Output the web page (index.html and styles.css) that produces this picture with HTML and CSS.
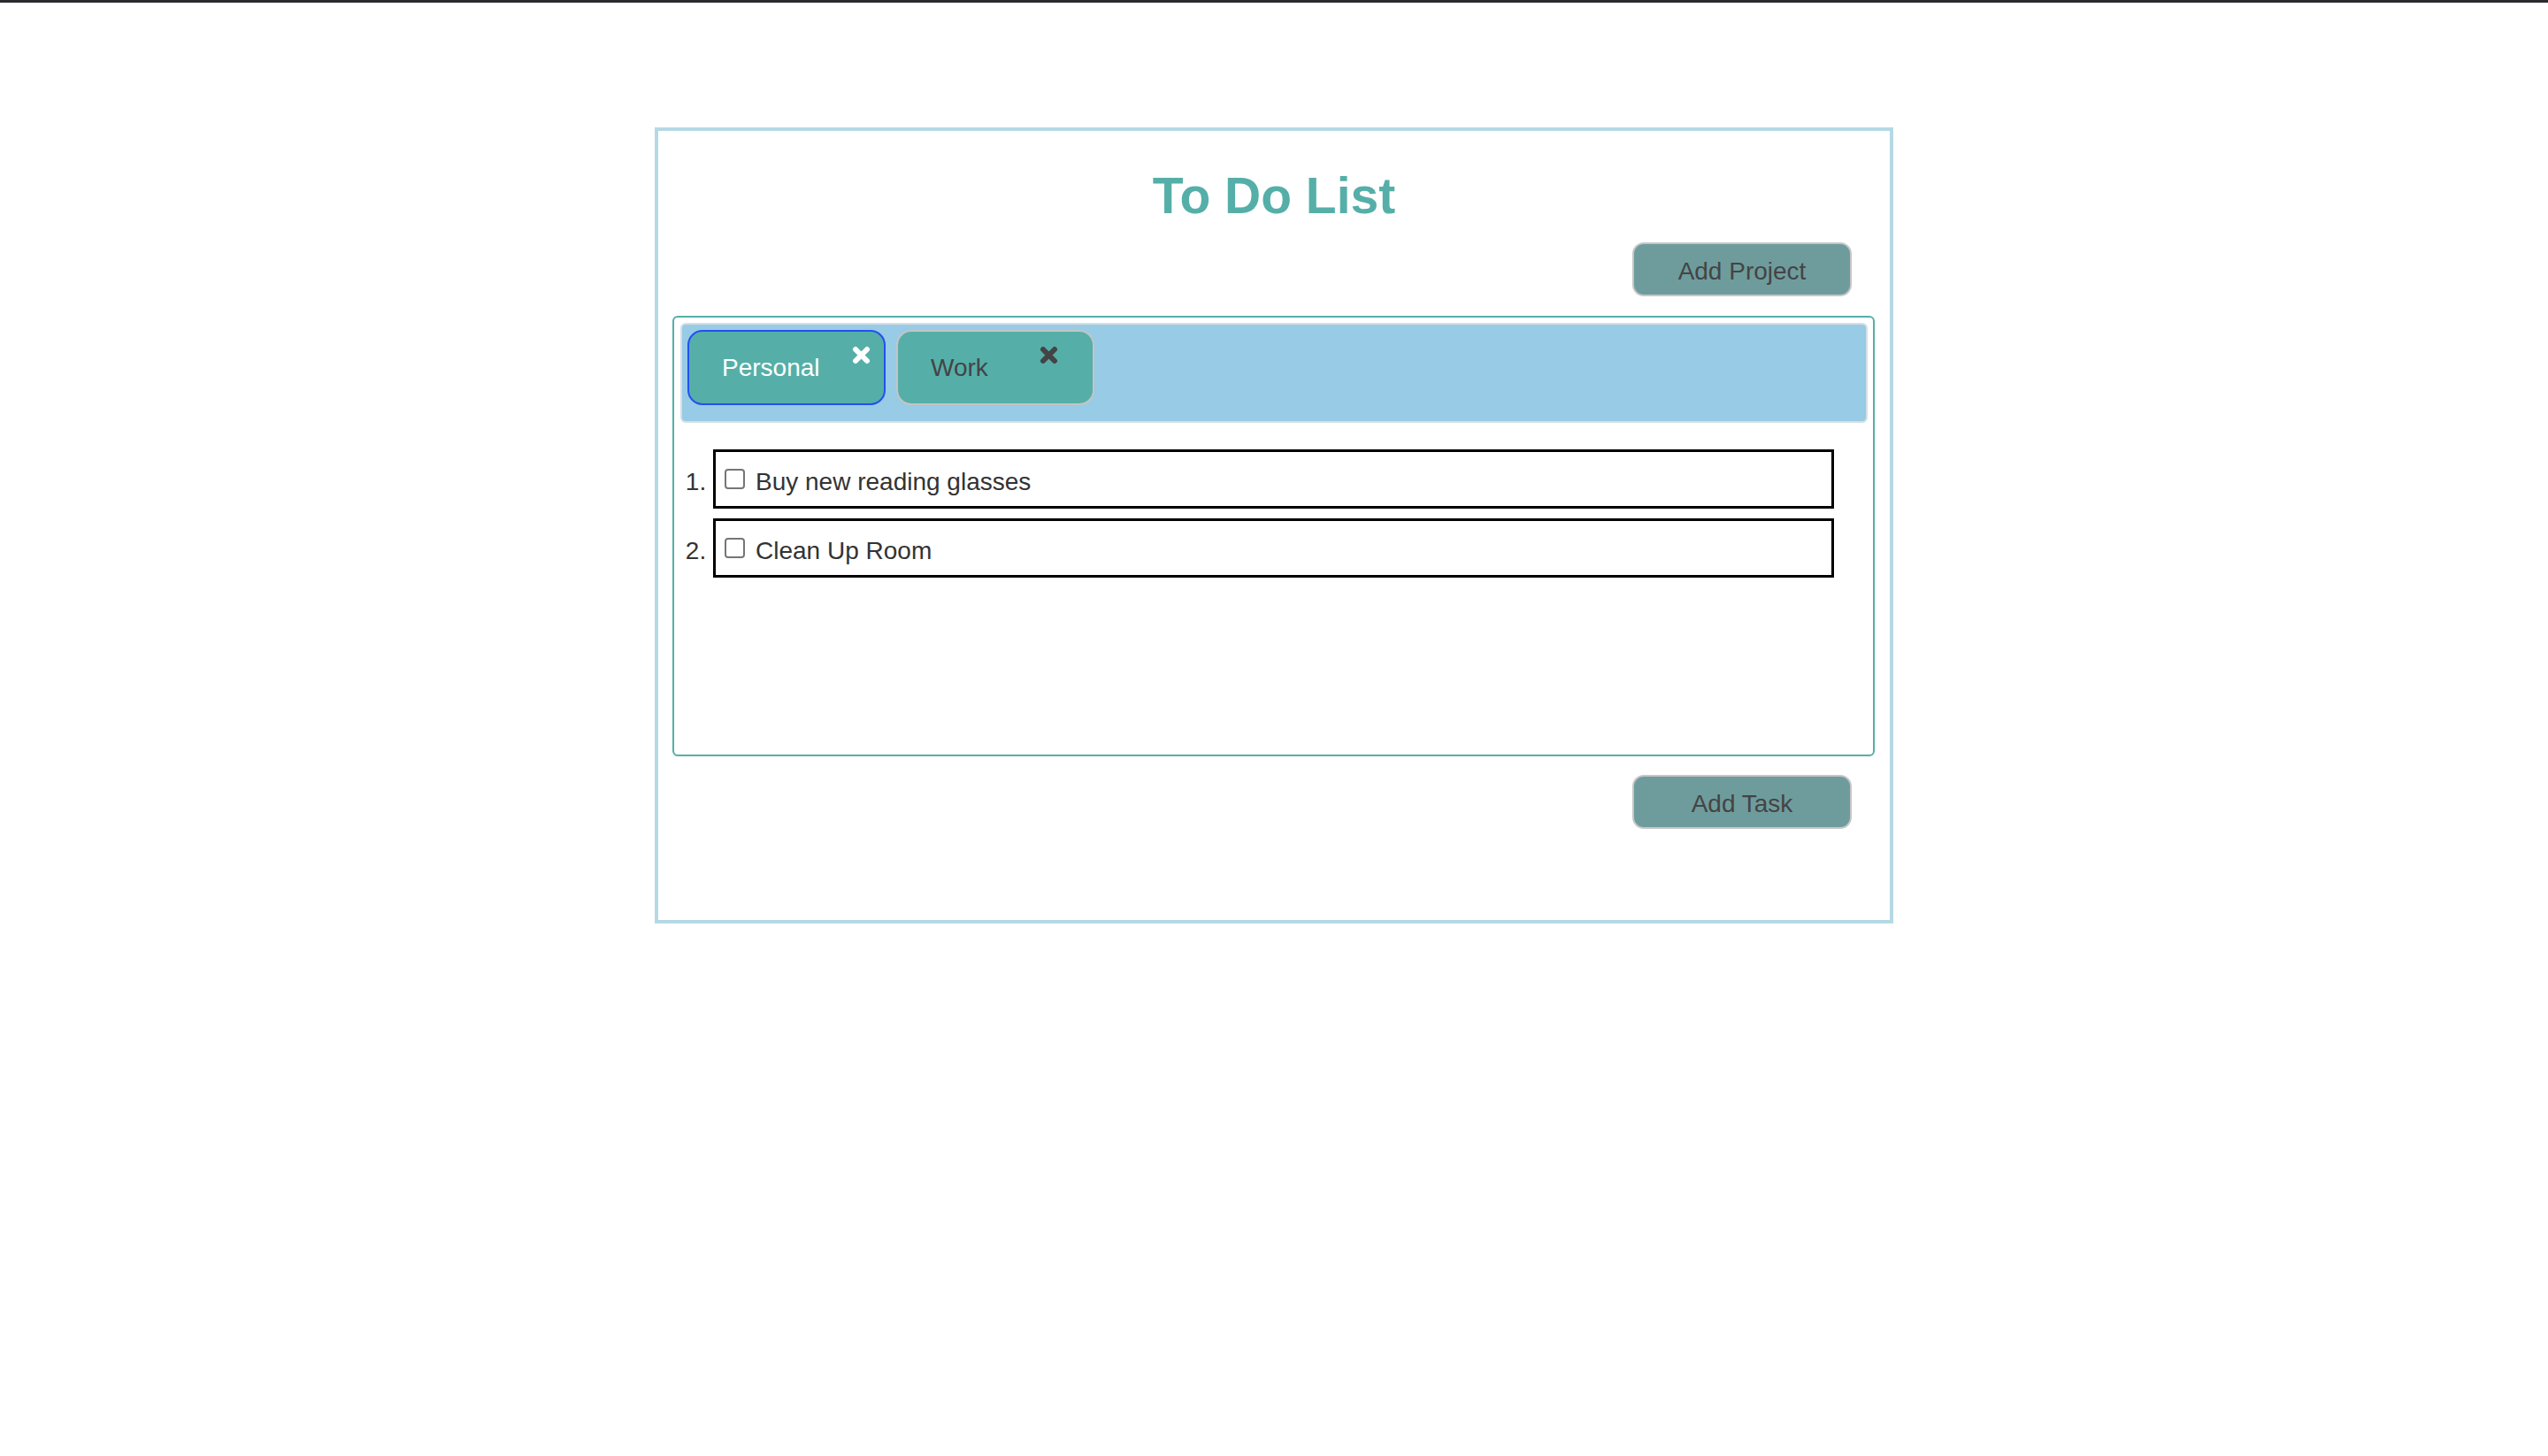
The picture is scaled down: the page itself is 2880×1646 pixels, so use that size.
FILE: index.html
```html
<!DOCTYPE html>
<html lang="en">
<head>
<meta charset="utf-8">
<title>To Do List</title>
<link rel="stylesheet" href="styles.css">
</head>
<body>
<div class="topbar"></div>
<main class="app">
  <h1 class="title">To Do List</h1>
  <div class="btn-row"><button class="btn">Add Project</button></div>
  <section class="panel">
    <div class="tabs">
      <div class="tab tab-active">
        <span class="tab-label">Personal</span>
        <svg class="tab-close" viewBox="0 0 21 21" width="21" height="21"><path d="M4 4 L17 17 M17 4 L4 17" stroke="currentColor" stroke-width="6" stroke-linecap="round" fill="none"/></svg>
      </div>
      <div class="tab tab-short">
        <span class="tab-label">Work</span>
        <svg class="tab-close" viewBox="0 0 21 21" width="21" height="21"><path d="M4 4 L17 17 M17 4 L4 17" stroke="currentColor" stroke-width="6" stroke-linecap="round" fill="none"/></svg>
      </div>
    </div>
    <ol class="tasks">
      <li class="task"><input type="checkbox" class="check"><span class="task-text">Buy new reading glasses</span></li>
      <li class="task"><input type="checkbox" class="check"><span class="task-text">Clean Up Room</span></li>
    </ol>
  </section>
  <div class="btn-row"><button class="btn">Add Task</button></div>
</main>
</body>
</html>
```

FILE: styles.css
```css
html, body {
  margin: 0;
  padding: 0;
  background: #ffffff;
  font-family: "Liberation Sans", Arial, Helvetica, sans-serif;
}

.topbar {
  height: 3px;
  background: #2b2b2e;
}

.app {
  box-sizing: border-box;
  width: 1400px;
  margin: 141px auto 0;
  border: 4px solid #b5d9e4;
  padding: 0 0 103px;
}

.title {
  margin: 0;
  padding-top: 45px;
  font-size: 57px;
  line-height: 57px;
  font-weight: bold;
  text-align: center;
  color: #55afa8;
}

.btn-row {
  display: flex;
  justify-content: flex-end;
  padding-right: 43px;
  margin-top: 21px;
}

.app > .title + .btn-row {
  margin-top: 24px;
}

.btn {
  box-sizing: border-box;
  width: 248px;
  height: 61px;
  padding: 4px 0 0;
  border: 2px solid #c6c6c6;
  border-radius: 13px;
  background: #6e9c9d;
  color: #444444;
  font-family: inherit;
  font-size: 28px;
  line-height: 53px;
  text-align: center;
}

.panel {
  box-sizing: border-box;
  height: 498px;
  margin: 22px 17px 0 16px;
  border: 2px solid #55afa8;
  border-radius: 6px;
}

.tabs {
  display: flex;
  gap: 12px;
  margin: 6px 6px 0 7px;
  padding: 6px 0 18px 6px;
  border: 2px solid #d6dfe3;
  border-radius: 6px;
  background: #97cbe6;
}

.tab {
  position: relative;
  box-sizing: border-box;
  width: 224px;
  height: 85px;
  padding-left: 37px;
  border: 2px solid #c4c4c4;
  border-radius: 17px;
  background: #55afa8;
  color: #444444;
  font-size: 28px;
  line-height: 81px;
}

.tab-active {
  border-color: #2350ef;
  color: #ffffff;
}

.tab-close {
  position: absolute;
  top: 16px;
  right: 15px;
  color: #444444;
}

.tab-active .tab-close {
  color: #ffffff;
}

.tab-short .tab-close {
  right: 39px;
}

.tasks {
  margin: 30px 44px 0;
  padding: 0;
  color: #333333;
  font-size: 28px;
}

.task {
  box-sizing: border-box;
  height: 67px;
  margin-bottom: 11px;
  padding-top: 6px;
  border: 3px solid #000000;
  line-height: 55px;
}

.check {
  -webkit-appearance: none;
  appearance: none;
  box-sizing: border-box;
  display: inline-block;
  width: 23px;
  height: 23px;
  margin: 0 12px 0 10px;
  border: 2px solid #767676;
  border-radius: 4px;
  background: #ffffff;
  vertical-align: 1px;
}

.task-text {
  color: #333333;
}
```
